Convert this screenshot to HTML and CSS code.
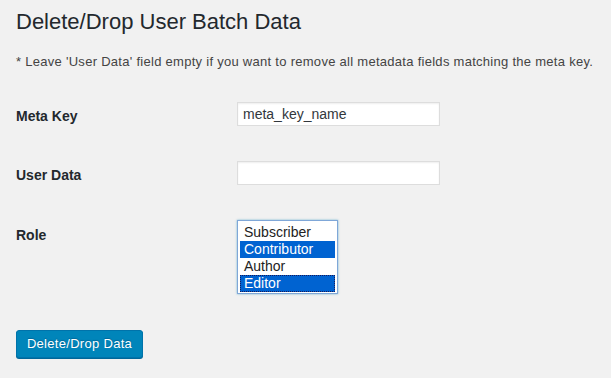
FILE: index.html
```html
<!DOCTYPE html>
<html lang="en">

<head>
    <meta charset="UTF-8">
    <title>Delete/Drop User Batch Data</title>
    <link rel="stylesheet" href="styles.css">
</head>

<body>
    <div class="wrap">
        <h1 class="page-title">Delete/Drop User Batch Data</h1>
        <p class="note">* Leave 'User Data' field empty if you want to remove all metadata fields matching the meta key.</p>

        <div class="form-table">
            <label class="form-label" for="meta-key">Meta Key</label>
            <input class="text-input" id="meta-key" type="text" value="meta_key_name">

            <label class="form-label" for="user-data">User Data</label>
            <input class="text-input" id="user-data" type="text" value="">

            <label class="form-label form-label-top">Role</label>
            <div class="role-list">
                <div class="role-option">Subscriber</div>
                <div class="role-option selected">Contributor</div>
                <div class="role-option">Author</div>
                <div class="role-option selected focused">Editor</div>
            </div>
        </div>

        <button class="button-primary" type="button">Delete/Drop Data</button>
    </div>
</body>

</html>
```

FILE: styles.css
```css
html,
body {
    margin: 0;
    background-color: #f1f1f1;
}

body {
    font-family: "Liberation Sans", Arial, sans-serif;
    color: #23282d;
    width: 611px;
    height: 378px;
    overflow: hidden;
}

.wrap {
    padding: 0 16px;
}

.page-title {
    font-size: 22px;
    font-weight: normal;
    line-height: 28px;
    margin: 0;
    padding-top: 8px;
    color: #23282d;
}

.note {
    font-size: 13px;
    line-height: 18px;
    letter-spacing: 0.28px;
    white-space: nowrap;
    margin: 17px 0 0 0;
    color: #444444;
}

.form-table {
    display: grid;
    grid-template-columns: 221px 203px;
    row-gap: 35px;
    margin-top: 31px;
    align-items: center;
}

.form-label {
    font-size: 14px;
    font-weight: bold;
    line-height: 20px;
    padding-top: 3px;
    color: #23282d;
}

.form-label-top {
    align-self: start;
    padding-top: 5px;
}

.text-input {
    box-sizing: border-box;
    width: 203px;
    height: 24px;
    margin: 0;
    padding: 0 5px;
    border: 1px solid #dddddd;
    box-shadow: inset 0 1px 2px rgba(0, 0, 0, 0.07);
    background-color: #ffffff;
    font-family: "Liberation Sans", Arial, sans-serif;
    font-size: 14px;
    color: #32373c;
    outline: none;
}

.role-list {
    box-sizing: border-box;
    width: 101px;
    height: 74px;
    padding: 3px 2px 2px;
    border: 1px solid #7fa7d8;
    box-shadow: 0 0 2px rgba(30, 140, 190, 0.6);
    background-color: #ffffff;
    font-size: 14px;
}

.role-option {
    height: 17px;
    line-height: 17px;
    padding: 0 4px;
    color: #222222;
}

.role-option.selected {
    background-color: #0063d1;
    color: #ffffff;
}

.role-option.focused {
    outline: 1px dotted #1a1a5a;
    outline-offset: -1px;
}

.button-primary {
    display: block;
    margin-top: 36px;
    box-sizing: border-box;
    width: 127px;
    height: 28px;
    padding: 0 8px 2px;
    border: 1px solid #0073aa;
    border-radius: 3px;
    background-color: #0085ba;
    box-shadow: 0 1px 0 #006799;
    color: #ffffff;
    font-family: "Liberation Sans", Arial, sans-serif;
    font-size: 13px;
    letter-spacing: 0.3px;
    line-height: 26px;
    text-shadow: 0 -1px 1px #006799;
}
```
